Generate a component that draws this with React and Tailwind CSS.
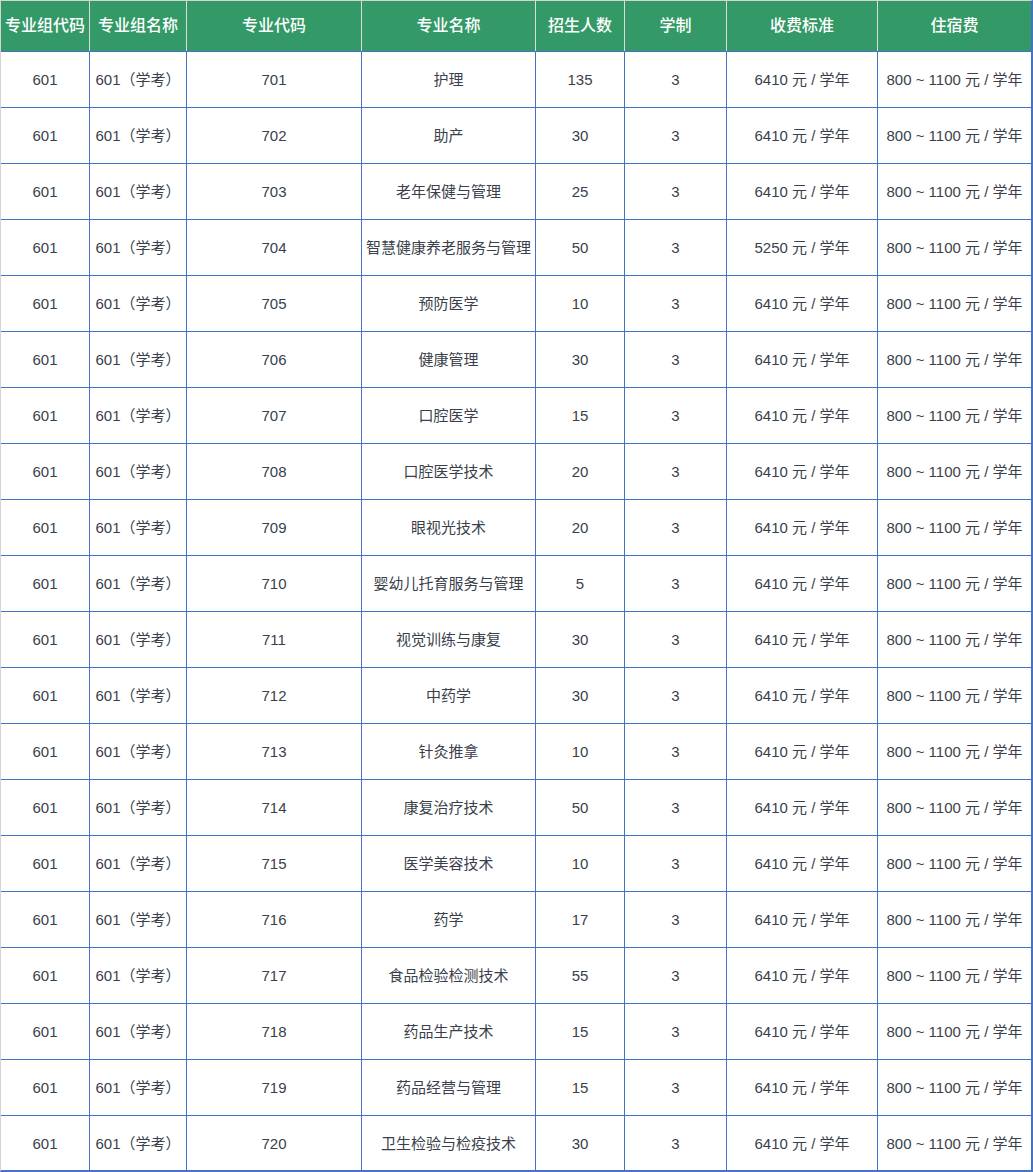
const headers = ["专业组代码", "专业组名称", "专业代码", "专业名称", "招生人数", "学制", "收费标准", "住宿费"]

const rows = [
  ["701", "护理", "135", "6410"],
  ["702", "助产", "30", "6410"],
  ["703", "老年保健与管理", "25", "6410"],
  ["704", "智慧健康养老服务与管理", "50", "5250"],
  ["705", "预防医学", "10", "6410"],
  ["706", "健康管理", "30", "6410"],
  ["707", "口腔医学", "15", "6410"],
  ["708", "口腔医学技术", "20", "6410"],
  ["709", "眼视光技术", "20", "6410"],
  ["710", "婴幼儿托育服务与管理", "5", "6410"],
  ["711", "视觉训练与康复", "30", "6410"],
  ["712", "中药学", "30", "6410"],
  ["713", "针灸推拿", "10", "6410"],
  ["714", "康复治疗技术", "50", "6410"],
  ["715", "医学美容技术", "10", "6410"],
  ["716", "药学", "17", "6410"],
  ["717", "食品检验检测技术", "55", "6410"],
  ["718", "药品生产技术", "15", "6410"],
  ["719", "药品经营与管理", "15", "6410"],
  ["720", "卫生检验与检疫技术", "30", "6410"],
]

const cols = "grid grid-cols-[89px_97px_175px_174px_89px_102px_151px_153px]"

export default function App() {
  return (
    <div
      className="w-[1033px] bg-white border-l border-t border-l-[#d4d4d4] border-t-[#d4d4d4] border-r-2 border-b-2 border-r-[#4472c4] border-b-[#4472c4]"
      style={{ fontFamily: '"Liberation Sans", "Noto Sans CJK SC", sans-serif' }}
    >
      {/* header */}
      <div className={`${cols} h-[51px] bg-[#339966] border-b border-[#4472c4]`}>
        {headers.map((h, i) => (
          <div
            key={h}
            className={`flex items-center justify-center text-[16px] font-medium text-white ${i < 7 ? "border-r border-[#dcdcdc]" : ""}`}
          >
            {h}
          </div>
        ))}
      </div>

      {/* body */}
      {rows.map((r, ri) => {
        const last = ri === rows.length - 1
        const cells = ["601", "601（学考）", r[0], r[1], r[2], "3", `${r[3]} 元 / 学年`, "800 ~ 1100 元 / 学年"]
        return (
          <div
            key={r[0]}
            className={`${cols} ${last ? "h-[54px]" : "h-[56px] border-b border-[#4472c4]"}`}
          >
            {cells.map((c, i) => (
              <div
                key={i}
                className={`flex items-center justify-center pt-[2px] text-[15px] text-[#3a3f4b] whitespace-nowrap ${i < 7 ? "border-r border-[#4472c4]" : ""}`}
              >
                {c}
              </div>
            ))}
          </div>
        )
      })}
    </div>
  )
}
